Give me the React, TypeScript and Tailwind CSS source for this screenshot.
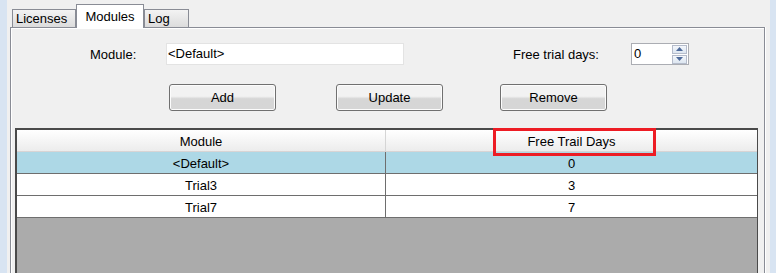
const rows = [
  { name: "<Default>", days: "0", selected: true },
  { name: "Trial3", days: "3", selected: false },
  { name: "Trial7", days: "7", selected: false },
];

const Tab = ({ label, active, width }: { label: string; active?: boolean; width: string }) => {
  if (active) {
    return (
      <div
        className={`${width} h-[24px] -mb-px z-10 bg-white border border-b-0 border-[#898c95] flex justify-center pt-[2px]`}
      >
        {label}
      </div>
    );
  }
  return (
    <div
      className={`${width} h-[18px] bg-gradient-to-b from-[#f3f3f3] to-[#dcdcdc] border border-b-0 border-[#898c95] flex items-center pl-[3px]`}
    >
      {label}
    </div>
  );
};

const WinButton = ({ label }: { label: string }) => (
  <button className="w-[107px] h-[27px] rounded-[3px] border border-[#707070] bg-gradient-to-b from-[#f2f2f2] from-45% to-[#d6d6d6] to-55% shadow-[inset_0_0_0_1px_#fcfcfc] text-black">
    {label}
  </button>
);

const App = () => {
  return (
    <div className="w-[776px] h-[273px] overflow-hidden flex bg-[#f0f0f0] text-[13px] text-black font-['Liberation_Sans',Arial,sans-serif]">
      <div className="w-[7px] bg-[#d8e4f2]" />
      <div className="w-[763px] pl-[3px] flex flex-col">
        <div className="h-[27px] flex items-end pl-[2px] shrink-0">
          <Tab label="Licenses" width="w-[64px]" />
          <Tab label="Modules" width="w-[68px]" active />
          <Tab label="Log" width="w-[45px]" />
        </div>
        <div className="w-[755px] flex-1 border border-b-0 border-[#898c95] shadow-[inset_1px_1px_0_#ffffff,1px_0_0_#ffffff] flex flex-col">
          <div className="flex items-center mt-[15px] h-[22px]">
            <span className="ml-[79px] w-[76px] pt-[2px]">Module:</span>
            <div className="w-[238px] h-[22px] bg-white border border-[#e3e3e3] flex items-center pl-[1px]">
              &lt;Default&gt;
            </div>
            <span className="ml-[109px] w-[118px] pt-[2px]">Free trial days:</span>
            <div className="w-[58px] h-[22px] bg-white border border-[#abadb3] flex items-center">
              <span className="pl-[2px] flex-1">0</span>
              <div className="w-[15px] mr-[1px] flex flex-col gap-[1px]">
                <div className="h-[9px] border border-[#b5bccb] bg-gradient-to-b from-[#f4f7fb] to-[#dde6f1] flex items-center justify-center">
                  <svg width="7" height="4" viewBox="0 0 7 4">
                    <path d="M0 4 L3.5 0 L7 4 Z" fill="#4e6a9a" />
                  </svg>
                </div>
                <div className="h-[9px] border border-[#b5bccb] bg-gradient-to-b from-[#f4f7fb] to-[#dde6f1] flex items-center justify-center">
                  <svg width="7" height="4" viewBox="0 0 7 4">
                    <path d="M0 0 L7 0 L3.5 4 Z" fill="#4e6a9a" />
                  </svg>
                </div>
              </div>
            </div>
          </div>
          <div className="flex mt-[19px] ml-[158px] gap-[60px]">
            <WinButton label="Add" />
            <div className="flex gap-[57px]">
              <WinButton label="Update" />
              <WinButton label="Remove" />
            </div>
          </div>
          <div className="relative mt-[17px] ml-[4px] w-[743px] flex-1 bg-[#ababab] border-l-2 border-t-2 border-r border-[#4a4a4a]">
            <div className="flex h-[22px] bg-gradient-to-b from-white to-[#ececec] border-b border-[#d8d4d4]">
              <div className="w-[369px] border-r border-[#d5d5d5] flex items-center justify-center pt-[2px]">Module</div>
              <div className="flex-1 flex items-center justify-center pt-[2px]">Free Trail Days</div>
            </div>
            {rows.map((r) => (
              <div
                key={r.name}
                className={`flex h-[22px] border-b border-[#6e6e6e] ${r.selected ? "bg-[#add8e6]" : "bg-white"}`}
              >
                <div className="w-[369px] border-r border-[#6e6e6e] flex items-center justify-center pt-[2px]">{r.name}</div>
                <div className="flex-1 flex items-center justify-center pt-[2px]">{r.days}</div>
              </div>
            ))}
            <div className="absolute left-[476px] top-[-2px] w-[163px] h-[28px] border-[3px] border-[#ed1c24]" />
          </div>
        </div>
      </div>
      <div className="flex-1 bg-[#d8e4f2]" />
    </div>
  );
};

export default App;
